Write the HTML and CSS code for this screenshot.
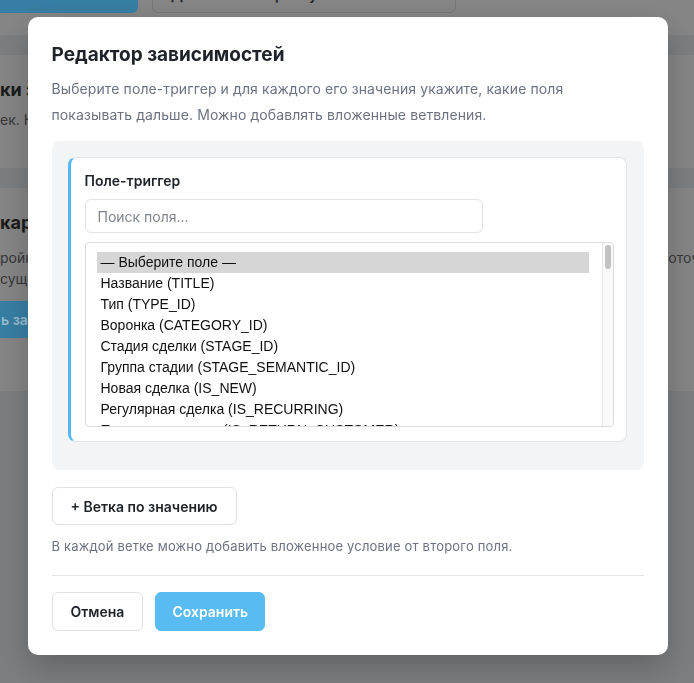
FILE: index.html
```html
<!DOCTYPE html>
<html lang="ru">
<head>
<meta charset="utf-8">
<title>Редактор зависимостей</title>
<link rel="stylesheet" href="styles.css">
</head>
<body>
<div class="page">
  <section class="card card-top">
    <div class="toolbar">
      <button class="bg-btn bg-btn-primary">+ Новое поле в окне</button>
      <button class="bg-btn bg-btn-outline">Добавить настройку зависимых полей</button>
    </div>
  </section>
  <section class="card card-mid">
    <h2 class="bg-title">ки зависимых полей</h2>
    <p class="bg-text">ек. Настройки применяются ко всем сделкам.</p>
  </section>
  <section class="card card-low">
    <h2 class="bg-title">карточки сделки</h2>
    <div class="bg-line"><span>ройки зависимостей</span><span class="bg-tail">поточных</span></div>
    <div class="bg-line"><span>существующих полей.</span></div>
    <button class="bg-btn bg-btn-primary bg-btn-wide">ь зависимость</button>
  </section>
</div>

<div class="backdrop">
  <div class="modal">
    <h1 class="modal-title">Редактор зависимостей</h1>
    <p class="modal-desc">Выберите поле-триггер и для каждого его значения укажите, какие поля показывать дальше. Можно добавлять вложенные ветвления.</p>

    <div class="rules">
      <div class="rule">
        <div class="rule-label">Поле-триггер</div>
        <input class="search" type="text" placeholder="Поиск поля...">
        <div class="listbox">
          <ul class="options">
            <li class="option option-selected">— Выберите поле —</li>
            <li class="option">Название (TITLE)</li>
            <li class="option">Тип (TYPE_ID)</li>
            <li class="option">Воронка (CATEGORY_ID)</li>
            <li class="option">Стадия сделки (STAGE_ID)</li>
            <li class="option">Группа стадии (STAGE_SEMANTIC_ID)</li>
            <li class="option">Новая сделка (IS_NEW)</li>
            <li class="option">Регулярная сделка (IS_RECURRING)</li>
            <li class="option">Повторная сделка (IS_RETURN_CUSTOMER)</li>
            <li class="option">Источник (SOURCE_ID)</li>
          </ul>
          <div class="scrollbar"><div class="thumb"></div></div>
        </div>
      </div>
    </div>

    <button class="btn btn-outline btn-add">+ Ветка по значению</button>
    <p class="hint">В каждой ветке можно добавить вложенное условие от второго поля.</p>

    <div class="footer">
      <button class="btn btn-outline">Отмена</button>
      <button class="btn btn-primary">Сохранить</button>
    </div>
  </div>
</div>
</body>
</html>
```

FILE: styles.css
```css
* { box-sizing: border-box; }

html, body {
  margin: 0;
  padding: 0;
}

body {
  background: #828385;
  font-family: Inter, "Noto Sans", sans-serif;
  color: #1f2937;
  overflow: hidden;
  height: 683px;
}

/* ---------- dimmed page behind the modal ---------- */
.page {
  margin-top: -40px;
  display: flex;
  flex-direction: column;
  gap: 20px;
}

.card {
  background: #8b8b8b;
  color: #1e1e1e;
}

.card-top {
  padding: 22px 0 22px;
}

.toolbar {
  display: flex;
  gap: 14px;
  margin-left: -30px;
}

.bg-btn {
  height: 31px;
  border-radius: 6px;
  font-family: Inter, sans-serif;
  font-size: 14px;
  font-weight: 600;
  padding: 0 18px;
  border: 1px solid transparent;
  white-space: nowrap;
  overflow: hidden;
}

.card-top .bg-btn {
  padding-bottom: 7px;
}

.bg-btn-primary {
  background: #3a84ab;
  color: #9cc3d9;
  width: 168px;
}

.bg-btn-outline {
  background: #8b8b8b;
  border-color: #7a7a7a;
  color: #262626;
  width: 304px;
}

.card-mid {
  height: 113px;
  padding: 23px 0 0;
}

.card-low {
  height: 203px;
  padding: 23px 0 0;
}

.bg-title {
  margin: 0;
  font-size: 18px;
  line-height: 24px;
  font-weight: 700;
  white-space: nowrap;
  color: #1c1c1c;
}

.card-mid .bg-title { margin-bottom: 8px; }
.card-low .bg-title { margin-bottom: 12px; }

.bg-text {
  margin: 0;
  font-size: 14px;
  line-height: 20px;
  color: #383a3d;
  white-space: nowrap;
}

.bg-line {
  display: flex;
  font-size: 14px;
  line-height: 21px;
  color: #383a3d;
  white-space: nowrap;
}

.bg-tail {
  margin-left: auto;
  width: 34px;
  overflow: hidden;
}

.bg-btn-wide {
  display: block;
  margin: 12px 0 0 -20px;
  height: 37px;
  width: 200px;
  padding: 0 0 0 20px;
  text-align: left;
}

/* ---------- modal ---------- */
.backdrop {
  position: fixed;
  inset: 0;
  background: rgba(0, 0, 0, 0.04);
  display: flex;
  justify-content: center;
  align-items: flex-start;
  padding: 17px 0 0 1px;
}

.modal {
  width: 640px;
  background: #ffffff;
  border-radius: 10px;
  padding: 24px;
  box-shadow: 0 12px 32px rgba(0, 0, 0, 0.22);
}

.modal-title {
  margin: 0 0 7px;
  font-size: 19px;
  line-height: 28px;
  font-weight: 700;
  color: #1f2329;
}

.modal-desc {
  margin: 0 0 13px;
  max-width: 570px;
  font-size: 14px;
  line-height: 26px;
  letter-spacing: 0.1px;
  color: #6b7280;
}

.rules {
  background: #f3f4f6;
  border-radius: 8px;
  padding: 16px 17px 28px 16px;
}

.rule {
  background: #ffffff;
  border: 1px solid #e3e5e8;
  border-left: 3px solid #56b8f0;
  border-radius: 8px;
  padding: 13px 12px 14px 14px;
}

.rule-label {
  font-size: 14px;
  line-height: 20px;
  font-weight: 600;
  color: #1f2329;
  margin-bottom: 8px;
}

.search {
  display: block;
  width: 398px;
  height: 34px;
  border: 1px solid #e1e3e7;
  border-radius: 6px;
  padding: 0 12px;
  font-family: Inter, sans-serif;
  font-size: 14px;
  color: #1f2329;
  margin-bottom: 9px;
  outline: none;
}

.search::placeholder {
  color: #80858d;
}

.listbox {
  display: flex;
  height: 185px;
  border: 1px solid #dcdcdc;
  border-radius: 4px;
  overflow: hidden;
  background: #fff;
}

.options {
  flex: 1;
  list-style: none;
  margin: 0;
  padding: 9px 13px 0 11px;
  overflow: hidden;
}

.option {
  height: 21px;
  line-height: 21px;
  padding: 0 4px;
  font-family: "Liberation Sans", Arial, sans-serif;
  font-size: 14px;
  color: #111;
  white-space: nowrap;
}

.option-selected {
  background: #d6d6d6;
}

.scrollbar {
  width: 11px;
  background: #fafafa;
  border-left: 1px solid #e6e6e6;
  padding: 2px 2px 0 2px;
}

.thumb {
  height: 24px;
  border-radius: 3px;
  background: #c2c2c2;
}

.btn {
  font-family: Inter, sans-serif;
  font-size: 14px;
  font-weight: 600;
  height: 39px;
  padding: 0 18px;
  border-radius: 6px;
  cursor: pointer;
}

.btn-outline {
  background: #ffffff;
  border: 1px solid #dfe1e5;
  color: #1f2329;
}

.btn-primary {
  background: #58bbf2;
  border: 1px solid #58bbf2;
  color: #ffffff;
  padding: 0 16px;
}

.btn-add {
  display: block;
  margin-top: 17px;
  height: 38px;
}

.hint {
  margin: 12px 0 0;
  font-size: 13px;
  line-height: 18px;
  letter-spacing: 0.18px;
  color: #6b7280;
  padding-bottom: 20px;
  border-bottom: 1px solid #e3e5e8;
}

.footer {
  display: flex;
  gap: 12px;
  margin-top: 16px;
}
```
